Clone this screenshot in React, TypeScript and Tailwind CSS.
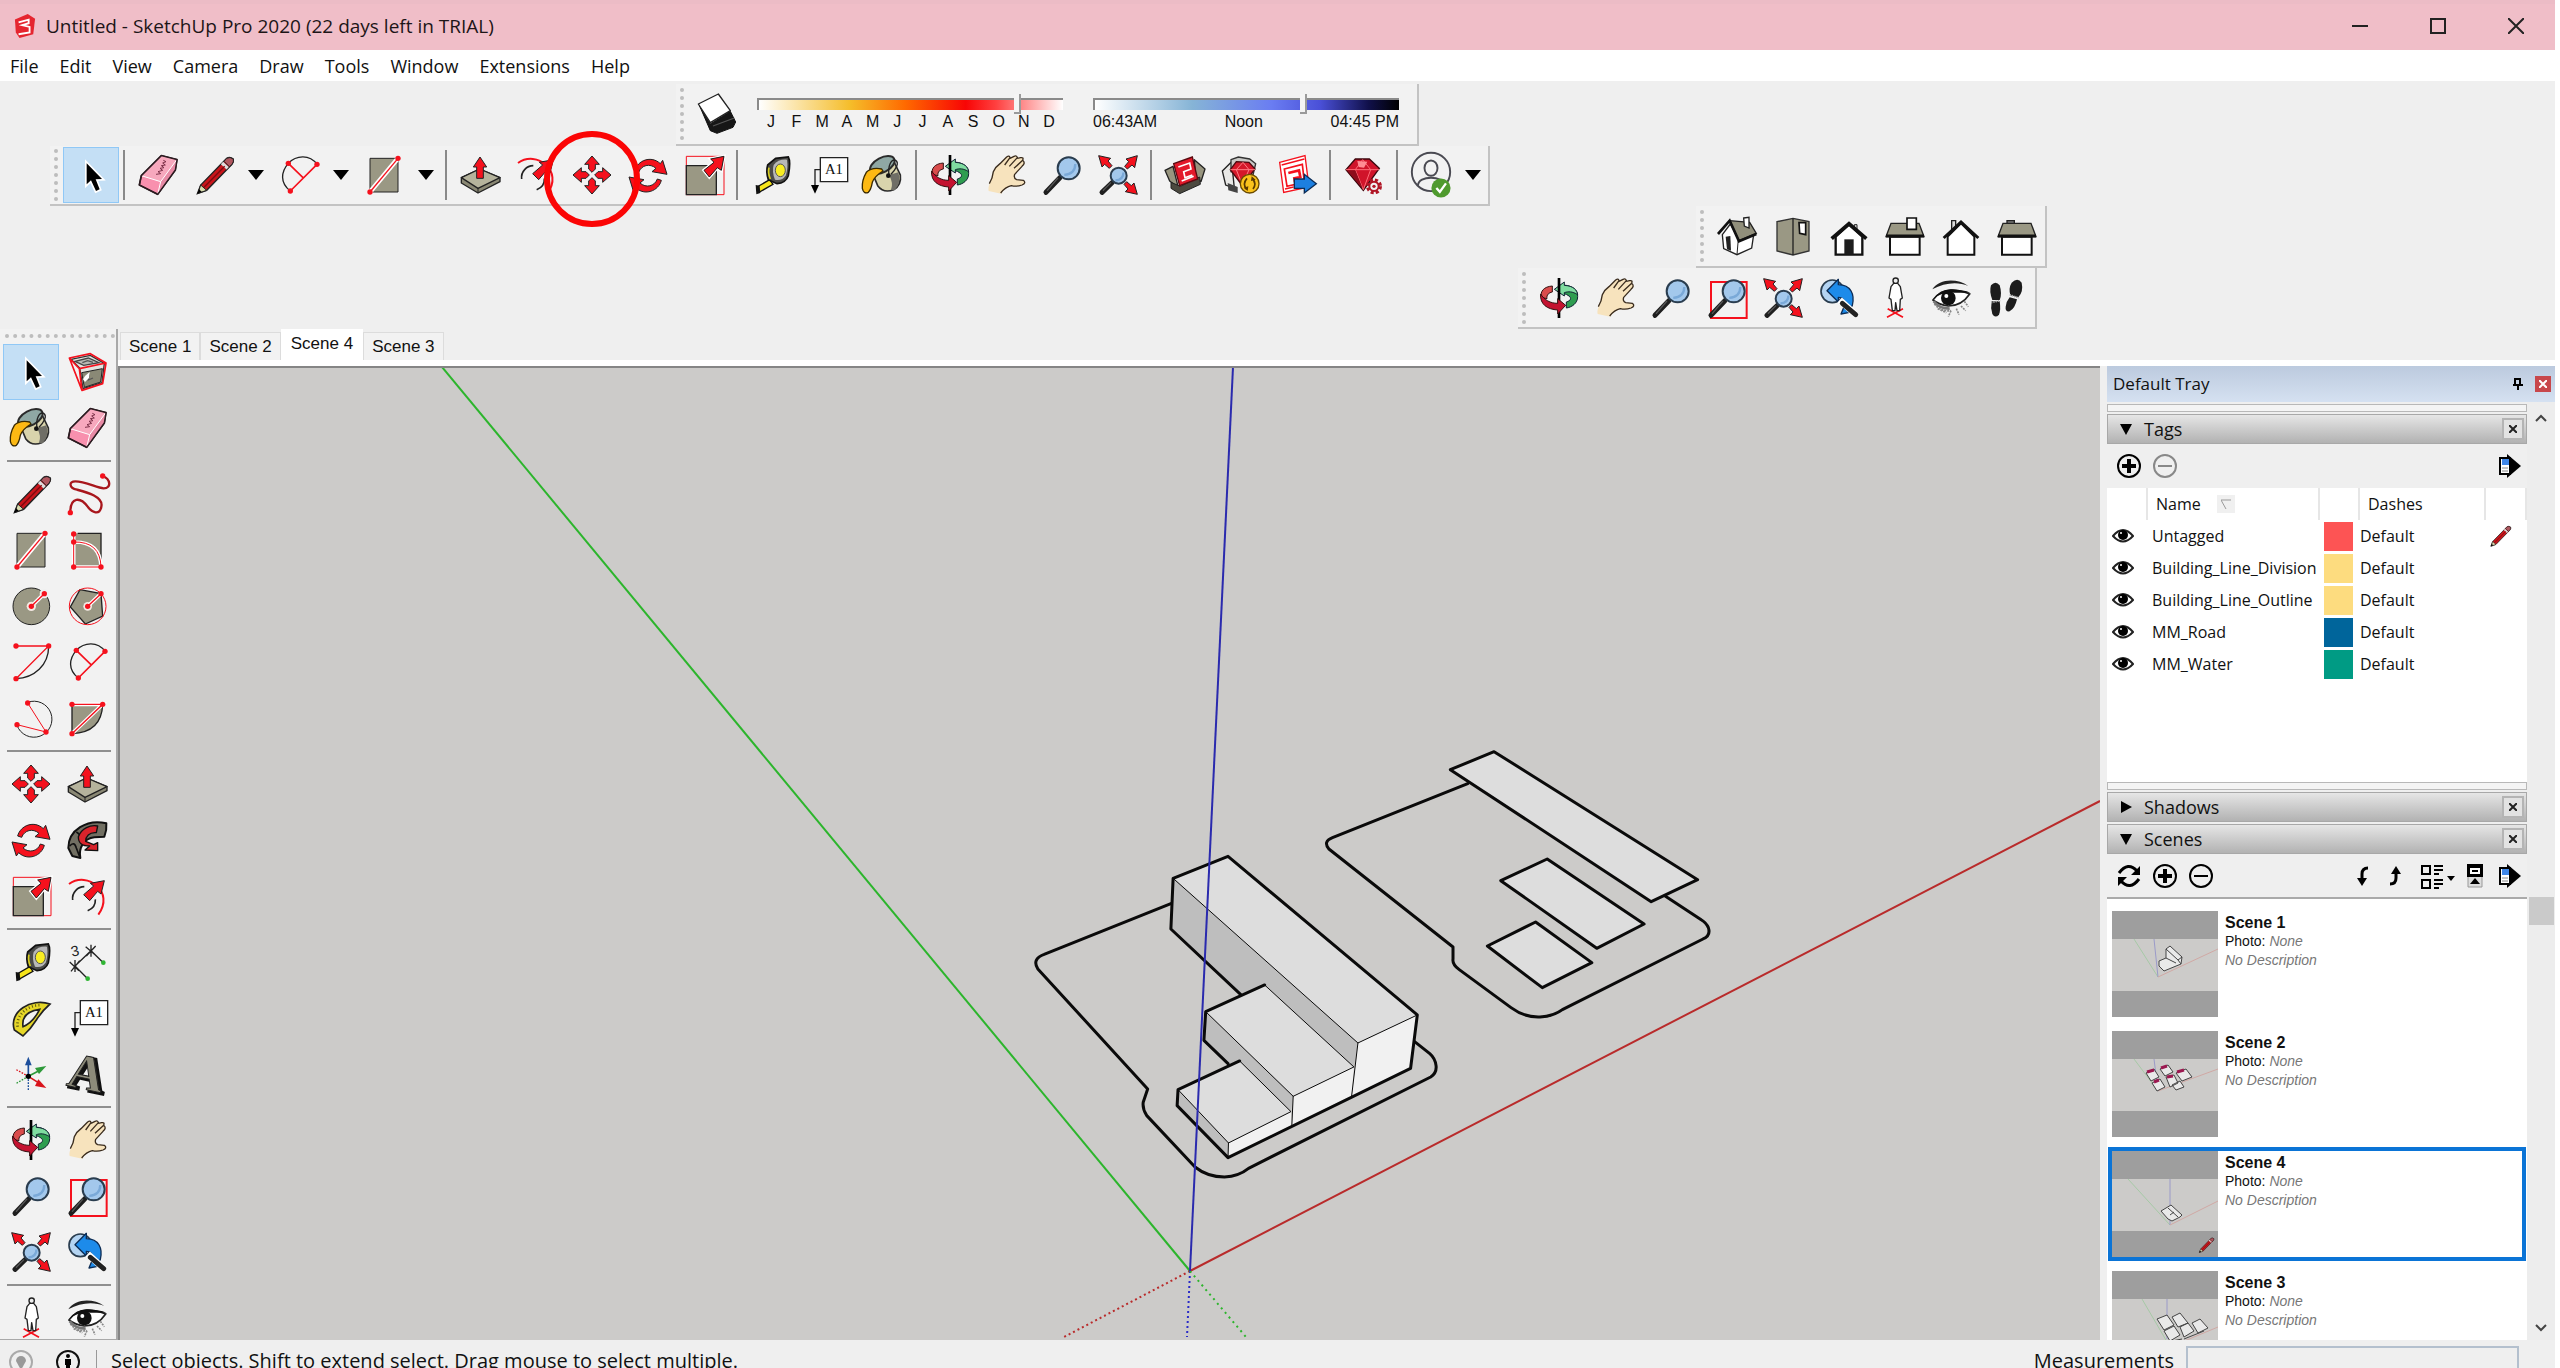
import type { ReactNode } from "react";
import clsx from "clsx";

const RED = "#f5111d";
const STONE = "#9a9884";

function Icon({ children, className }: { children: ReactNode; className?: string }) {
  return (
    <svg viewBox="0 0 120 120" className={clsx("shrink-0 overflow-visible", className ?? "size-10")} aria-hidden="true">
      {children}
    </svg>
  );
}

function Dots({ points }: { points: [number, number][] }) {
  return (
    <>
      {points.map(([x, y]) => (
        <circle key={`${x}-${y}`} cx={x} cy={y} r="8" fill={RED} />
      ))}
    </>
  );
}

/* ---------- drawing and selection tools ---------- */

const SelectIcon = () => (
  <Icon>
    <path d="M47 25V88L60 76L75 108L86 103L74 73L93 72Z" fill="#000" stroke="#fff" strokeWidth="10" paintOrder="stroke" />
  </Icon>
);

const ComponentIcon = () => (
  <Icon>
    <path d="M12 22L38 48L48 110L105 92L112 34L70 10Z" fill="#e4e4e0" stroke="#333" strokeWidth="4" />
    <path d="M44 62L106 50L101 90L52 106Z" fill="#8a8976" stroke="#222" strokeWidth="3" />
    <path d="M24 28L64 18L96 32L50 40Z" fill="#b9b9b3" stroke="#444" strokeWidth="4" />
    <path d="M46 32L62 26L78 31M54 76L66 70L64 84L78 78" fill="none" stroke="#555" strokeWidth="4" />
    <path d="M54 72L68 60L66 78L54 90L48 82Z" fill="#fff" />
    <path d="M7 18L70 5L117 33L37 50ZM7 18L45 115L107 95L117 33M37 50L45 115" fill="none" stroke={RED} strokeWidth="5" strokeLinejoin="round" />
  </Icon>
);

const PaintIcon = () => (
  <Icon>
    <path d="M24 44L44 92Q62 116 92 104Q116 90 112 60L90 14Z" fill="#d9d4ac" stroke="#2b2b2b" strokeWidth="5" />
    <path d="M78 60L106 52Q116 84 96 104Q88 108 84 104Q92 84 78 60Z" fill="#6f6e66" />
    <ellipse cx="58" cy="30" rx="40" ry="22" transform="rotate(-28 58 30)" fill="#8fa8a4" stroke="#2b2b2b" strokeWidth="6" />
    <path d="M56 42Q26 36 10 52Q-4 76 -2 100Q2 118 16 112Q24 104 28 82Q34 64 60 48Z" fill="#fdb913" stroke="#3a2a00" strokeWidth="4" />
    <path d="M78 62C74 30 86 10 98 16C110 24 98 44 84 58" fill="none" stroke="#222" strokeWidth="4" />
    <circle cx="76" cy="62" r="7" fill="#111" />
  </Icon>
);

const EraserIcon = () => (
  <Icon>
    <path d="M10 62L70 2L117 14L112 45L59 118L4 90Z" fill="#f890ae" stroke="#2b1b20" strokeWidth="5" strokeLinejoin="round" />
    <path d="M10 62L70 2L117 14L68 80Z" fill="#f7a8bd" />
    <path d="M68 80L117 14L112 45L59 118Z" fill="#e78aa5" />
    <path d="M10 62L68 80L59 118M68 80L115 16" fill="none" stroke="#fff" strokeWidth="3" />
    <path d="M10 62L70 2L117 14L112 45L59 118L4 90Z" fill="none" stroke="#2b1b20" strokeWidth="4" strokeLinejoin="round" />
    <path d="M76 16L84 20L74 24L82 30L70 32L78 38L66 40L74 46L60 50L68 56L54 58" fill="none" stroke="#7c3048" strokeWidth="3" />
  </Icon>
);

const PencilIcon = ({ className }: { className?: string }) => (
  <Icon className={className}>
    <path d="M10 116L20 90L98 10Q108 4 118 12Q120 20 114 28L38 106Z" fill="#c9151b" stroke="#222" strokeWidth="4" />
    <path d="M20 90L38 106L12 115Z" fill="#d9dcae" stroke="#222" strokeWidth="3" />
    <path d="M10 116L15 103L23 110Z" fill="#000" />
    <path d="M84 24L101 40" stroke="#ddd" strokeWidth="10" />
    <path d="M90 19L98 10Q108 4 118 12Q120 20 114 28L106 35Z" fill="#b0575f" stroke="#222" strokeWidth="3" />
    <path d="M30 97L92 34" stroke="#7a0b10" strokeWidth="4" />
  </Icon>
);

const FreehandIcon = () => (
  <Icon>
    <path d="M107 6C130 15 135 42 110 43C90 42 55 22 25 22C5 22 5 42 30 47C60 55 110 68 103 98C98 125 75 116 62 98C40 68 10 68 10 115" fill="none" stroke="#a8161c" strokeWidth="7" />
    <Dots points={[[107, 6], [10, 116]]} />
  </Icon>
);

const RectangleIcon = () => (
  <Icon>
    <path d="M18 10H102V111H18Z" fill={STONE} stroke="#222" strokeWidth="3" />
    <path d="M18 111L102 10" stroke="#fff" strokeWidth="14" />
    <path d="M18 111L102 10" stroke={RED} strokeWidth="4" />
    <Dots points={[[18, 111], [102, 10]]} />
  </Icon>
);

const RotatedRectIcon = () => (
  <Icon>
    <path d="M20 10H102V111H20Z" fill={STONE} />
    <path d="M32 10H102V90" fill="none" stroke="#222" strokeWidth="4" />
    <path d="M20 36Q100 34 102 111M20 12V111H102" fill="none" stroke="#fff" strokeWidth="11" />
    <path d="M20 36Q100 34 102 111M20 12V111H102" fill="none" stroke={RED} strokeWidth="3" />
    <Dots points={[[20, 12], [20, 36], [20, 111], [102, 111]]} />
  </Icon>
);

const CircleIcon = () => (
  <Icon>
    <circle cx="61" cy="61" r="55" fill={STONE} stroke="#222" strokeWidth="3" />
    <path d="M61 61L100 23" stroke="#fff" strokeWidth="12" />
    <circle cx="61" cy="61" r="14" fill="#f3e9e2" />
    <circle cx="100" cy="23" r="14" fill="#f0f0f0" />
    <path d="M61 61L100 23" stroke={RED} strokeWidth="4" />
    <Dots points={[[61, 61], [100, 23]]} />
  </Icon>
);

const PolygonIcon = () => (
  <Icon>
    <path d="M39 11L102 23L107 90L55 114L10 63Z" fill={STONE} stroke="#222" strokeWidth="4" />
    <circle cx="62" cy="61" r="55" fill="none" stroke={RED} strokeWidth="3" />
    <circle cx="62" cy="61" r="13" fill="#f3e9e2" />
    <path d="M62 61L102 23" stroke="#fff" strokeWidth="11" />
    <path d="M62 61L102 23" stroke={RED} strokeWidth="4" />
    <Dots points={[[62, 61], [102, 23]]} />
  </Icon>
);

const ArcIcon = () => (
  <Icon>
    <path d="M113 12C113 70 70 108 15 110" fill="none" stroke="#222" strokeWidth="4" />
    <path d="M15 12H113L15 110" fill="none" stroke={RED} strokeWidth="4" />
    <Dots points={[[15, 12], [113, 12], [15, 110]]} />
  </Icon>
);

const TwoPointArcIcon = () => (
  <Icon>
    <path d="M34 108C2 84 6 50 28 25C52 0 92 -2 114 28" fill="none" stroke="#222" strokeWidth="4" />
    <path d="M34 108L114 28M28 25L72 68" fill="none" stroke={RED} strokeWidth="5" />
    <Dots points={[[34, 108], [114, 28], [28, 25]]} />
  </Icon>
);

const ThreePointArcIcon = () => (
  <Icon>
    <path d="M50 13A54 54 0 1 1 18 82" fill="none" stroke="#222" strokeWidth="3" />
    <path d="M50 15L105 102L18 80" fill="none" stroke={RED} strokeWidth="3" />
    <Dots points={[[50, 15], [105, 102], [18, 80]]} />
  </Icon>
);

const PieIcon = () => (
  <Icon>
    <path d="M15 19H107Q104 104 15 107Z" fill={STONE} stroke="#222" strokeWidth="4" />
    <path d="M15 19H107L15 107" fill="none" stroke="#fff" strokeWidth="11" />
    <path d="M15 19H107L15 107" fill="none" stroke={RED} strokeWidth="4" />
    <Dots points={[[15, 19], [107, 19], [15, 107]]} />
  </Icon>
);

/* ---------- modification tools ---------- */

const MoveIcon = () => (
  <Icon>
    {[0, 90, 180, 270].map((angle) => (
      <path
        key={angle}
        d="M60 3L82 28H70V42L60 52L50 42V28H38Z"
        transform={`rotate(${angle} 60 60)`}
        fill={RED}
        stroke="#222"
        strokeWidth="3"
      />
    ))}
  </Icon>
);

const PushPullIcon = () => (
  <Icon>
    <path d="M4 68L59 42L120 68V80L54 114L4 84Z" fill="#8a8874" stroke="#222" strokeWidth="4" strokeLinejoin="round" />
    <path d="M4 68L59 42L120 68L54 100Z" fill="#b5b39c" stroke="#222" strokeWidth="4" strokeLinejoin="round" />
    <path d="M54 100V114" stroke="#222" strokeWidth="3" />
    <path d="M60 6L80 36H70V70H50V36H40Z" fill={RED} stroke="#222" strokeWidth="3" />
  </Icon>
);

const RotateIcon = () => (
  <Icon>
    {[0, 180].map((angle) => (
      <path
        key={angle}
        d="M20 48C28 16 70 0 97 26L104 16L117 58L72 50L84 40C66 24 40 30 32 52Z"
        transform={`rotate(${angle} 60 62)`}
        fill={RED}
        stroke="#222"
        strokeWidth="3"
        strokeLinejoin="round"
      />
    ))}
  </Icon>
);

const FollowMeIcon = () => (
  <Icon>
    <path d="M118 10C60 -4 4 30 4 84L16 108L40 114C34 84 50 56 82 52L112 50Q120 30 118 10Z" fill="#716f62" stroke="#111" strokeWidth="6" strokeLinejoin="round" />
    <path d="M8 78Q22 62 28 84L38 110M28 36Q44 44 42 66" fill="none" stroke="#111" strokeWidth="5" />
    <path d="M34 50C44 24 70 14 92 18L88 38C66 36 56 50 56 64L80 74L92 68V92L54 90L68 78C44 78 34 70 34 50Z" fill="#d8232b" stroke="#111" strokeWidth="4" strokeLinejoin="round" />
  </Icon>
);

const ScaleIcon = () => (
  <Icon>
    <path d="M7 4H120V119H7Z" fill="none" stroke={RED} strokeWidth="3" />
    <path d="M7 32H97V119H7Z" fill={STONE} stroke="#222" strokeWidth="4" />
    <path d="M120 4L112 46L100 38L76 66L60 46L90 22L80 12Z" fill={RED} stroke="#fff" strokeWidth="10" paintOrder="stroke" />
    <path d="M120 4L112 46L100 38L76 66L60 46L90 22L80 12Z" fill={RED} stroke="#222" strokeWidth="3" />
  </Icon>
);

const OffsetIcon = () => (
  <Icon>
    <path d="M6 24C62 -16 144 48 94 116" fill="none" stroke={RED} strokeWidth="6" />
    <path d="M17 72C14 50 32 32 52 32M85 70C86 86 78 98 62 104" fill="none" stroke="#222" strokeWidth="5" />
    <path d="M112 14L102 54L92 46L68 74L50 56L80 30L70 22Z" fill={RED} stroke="#222" strokeWidth="3" />
  </Icon>
);

/* ---------- construction tools ---------- */

const TapeIcon = () => (
  <Icon>
    <path d="M18 96L56 74L66 88L24 112Z" fill="#f7e51b" stroke="#111" strokeWidth="4" />
    <path d="M14 90L26 92L28 114L16 118Z" fill="#111" />
    <path d="M50 30L74 10L112 6Q120 20 112 62Q104 84 78 86L52 74Q44 50 50 30Z" fill="#4a4a48" stroke="#111" strokeWidth="5" />
    <path d="M68 30Q82 12 108 14Q112 40 104 62Q94 78 72 74Q62 50 68 30Z" fill="#b8b8b8" />
    <ellipse cx="88" cy="46" rx="15" ry="19" fill="#f9ee22" stroke="#555" strokeWidth="3" />
    <path d="M54 38Q50 54 58 72" fill="none" stroke="#d8ce1e" strokeWidth="5" />
  </Icon>
);

const DimensionIcon = () => (
  <Icon>
    <path d="M62 110L24 72L72 26L109 62M8 60L36 86M38 56L12 88M56 14L86 40M86 12L58 42M24 54V90M72 8V44" fill="none" stroke="#222" strokeWidth="4" />
    <circle cx="62" cy="110" r="7" fill="#2fb533" />
    <circle cx="109" cy="62" r="7" fill="#2fb533" />
    <text x="12" y="42" fontSize="44" fontFamily="Liberation Sans, sans-serif" fill="#222" transform="rotate(-12 24 28)">3</text>
  </Icon>
);

const ProtractorIcon = () => (
  <Icon>
    <path
      d="M117 18C60 -2 -8 42 10 96L36 114Q60 92 76 66T117 18ZM86 34Q66 74 36 86Q30 42 86 34Z"
      fill="#e6d728"
      fillRule="evenodd"
      stroke="#222"
      strokeWidth="5"
    />
    <path d="M20 86C14 50 54 18 92 22" fill="none" stroke="#5e5810" strokeWidth="8" strokeDasharray="3 7" />
  </Icon>
);

const TextIcon = () => (
  <Icon>
    <path d="M40 8H122V80H40Z" fill="#fff" stroke="#222" strokeWidth="4" />
    <path d="M40 44H24V92" fill="none" stroke="#222" strokeWidth="4" />
    <path d="M12 90H36L24 116Z" fill="#000" />
    <text x="81" y="58" fontSize="44" textAnchor="middle" fontFamily="Liberation Serif, serif" fill="#111">A1</text>
  </Icon>
);

const AxesIcon = () => (
  <Icon>
    <path d="M52 67V30" stroke="#1d4f9c" strokeWidth="5" />
    <path d="M42 34L52 8L62 34Z" fill="#1d4f9c" />
    <path d="M52 67L84 50" stroke="#2e9a3a" strokeWidth="5" />
    <path d="M72 42L106 36L84 60Z" fill="#2e9a3a" />
    <path d="M52 67L82 86" stroke="#d9141c" strokeWidth="5" />
    <path d="M82 76L106 102L72 96Z" fill="#d9141c" />
    <path d="M52 67V112" stroke="#1d4f9c" strokeWidth="4" strokeDasharray="5 4" />
    <path d="M52 67L14 46" stroke="#d9141c" strokeWidth="4" strokeDasharray="5 4" />
    <path d="M52 67L16 88" stroke="#2e9a3a" strokeWidth="4" strokeDasharray="5 4" />
    <circle cx="52" cy="67" r="8" fill="#000" />
  </Icon>
);

const TextThreeDIcon = () => (
  <Icon>
    <g fontFamily="Liberation Serif, serif" fontWeight="bold" fontSize="150" transform="rotate(12 60 60)">
      <text x="12" y="110" fill="#2b2a26" stroke="#111" strokeWidth="8">A</text>
      <text x="4" y="106" fill="#8d8b7a" stroke="#222" strokeWidth="3">A</text>
    </g>
  </Icon>
);

/* ---------- camera tools ---------- */

const OrbitIcon = () => (
  <Icon>
    <path d="M60 22C92 18 118 32 116 56C116 76 98 88 82 90V72C96 68 98 60 90 54C80 46 70 46 60 46Z" fill="#2e9d50" stroke="#123" strokeWidth="3" />
    <path d="M46 34L76 12V22C104 24 114 36 116 50C100 40 88 40 76 44V54Z" fill="#7fdca0" stroke="#123" strokeWidth="3" />
    <path d="M40 24C14 26 4 40 6 58L24 62C22 50 30 44 40 42Z" fill="#d94c4c" stroke="#311" strokeWidth="3" />
    <path d="M60 0V120" stroke="#000" strokeWidth="8" />
    <path d="M5 48C2 80 26 94 56 96V108L80 82L56 62V76C34 76 16 66 5 48Z" fill="#c41230" stroke="#311" strokeWidth="3" strokeLinejoin="round" />
  </Icon>
);

const HandIcon = () => (
  <Icon>
    <path
      d="M8 108C4 92 20 70 22 50Q28 36 42 26L62 6Q70 0 72 8L84 4Q92 0 94 8L104 8Q114 6 110 16L114 20Q118 28 108 34L86 58Q82 70 92 74L112 76Q122 84 108 90Q92 96 76 92Q58 96 46 116Z"
      fill="#f7e3bd"
    />
    <path
      d="M10 86Q20 70 22 50Q28 36 42 26L62 6Q70 0 72 8L56 30M72 10L84 4Q92 0 94 8L70 34M94 10L104 8Q114 6 110 16L84 40M110 16Q120 24 108 34L86 58Q82 70 92 74L112 76Q122 84 108 90Q92 96 76 92Q58 96 44 114"
      fill="none"
      stroke="#3a2c1e"
      strokeWidth="4"
      strokeLinejoin="round"
    />
  </Icon>
);

function Lens({ cx, cy, r }: { cx: number; cy: number; r: number }) {
  return (
    <>
      <path d={`M12 112L${cx - r * 0.8} ${cy + r * 0.85}`} stroke="#1f1f1f" strokeWidth="15" strokeLinecap="round" />
      <path d={`M16 106L${cx - r} ${cy + r * 0.9}`} stroke="#555" strokeWidth="4" strokeLinecap="round" />
      <circle cx={cx} cy={cy} r={r} fill="#a3c8ec" stroke="#2a3d4f" strokeWidth="6" />
      <path d={`M${cx - r * 0.4} ${cy + r * 0.6}Q${cx + r * 0.6} ${cy + r * 0.5} ${cx + r * 0.6} ${cy - r * 0.4}`} fill="none" stroke="#7aa9d8" strokeWidth="7" />
    </>
  );
}

const ZoomIcon = () => (
  <Icon>
    <Lens cx={80} cy={40} r={33} />
  </Icon>
);

const ZoomWindowIcon = () => (
  <Icon>
    <path d="M12 12H119V120H12Z" fill="none" stroke={RED} strokeWidth="6" />
    <Lens cx={80} cy={40} r={33} />
  </Icon>
);

const ZoomExtentsIcon = () => (
  <Icon>
    <Lens cx={62} cy={62} r={24} />
    {["rotate(0 60 60)", "rotate(90 60 60)", "rotate(180 60 60)"].map((transform) => (
      <path key={transform} d="M2 2L38 10L30 18L42 32L34 40L20 28L12 36Z" transform={transform} fill={RED} stroke="#222" strokeWidth="3" />
    ))}
  </Icon>
);

const PreviousIcon = () => (
  <Icon>
    <circle cx="40" cy="40" r="34" fill="#b4d4f2" stroke="#2a3d4f" strokeWidth="5" />
    <path d="M24 38L58 4V20C96 20 108 50 100 82L88 104L66 108L76 84C78 66 72 58 58 58V72Z" fill="#1d8bea" stroke="#0c2c55" strokeWidth="4" strokeLinejoin="round" />
    <path d="M62 66L110 110" stroke="#fff" strokeWidth="20" />
    <path d="M70 76L110 110" stroke="#222" strokeWidth="15" strokeLinecap="round" />
  </Icon>
);

const PositionCameraIcon = () => (
  <Icon>
    <path d="M38 92L84 118M84 92L36 118" stroke={RED} strokeWidth="5" />
    <path d="M56 16L48 26L42 60L48 64L52 98H60L62 74L66 98H74L76 64L82 60L76 26L68 16Z" fill="#fff" stroke="#222" strokeWidth="4" strokeLinejoin="round" />
    <circle cx="62" cy="8" r="8" fill="#eee" stroke="#222" strokeWidth="4" />
  </Icon>
);

const LookAroundIcon = () => (
  <Icon>
    <path d="M4 34C24 2 78 0 112 24C80 10 40 14 4 34Z" fill="#222" />
    <path d="M6 66Q24 38 60 36Q92 38 116 48Q92 84 52 84Q24 80 6 66Z" fill="#fff" stroke="#222" strokeWidth="5" />
    <path d="M6 64Q30 30 66 34Q98 36 118 44Q90 44 70 44Q30 42 6 64Z" fill="#111" />
    <circle cx="52" cy="60" r="22" fill="#111" />
    <circle cx="46" cy="54" r="6" fill="#fff" />
    <path d="M10 78Q30 102 60 98M20 92L46 104M60 98L52 116M76 92L84 110M90 84L104 98M100 70L112 86" fill="none" stroke="#888" strokeWidth="5" strokeDasharray="6 3" />
    <path d="M8 70Q24 92 56 92" fill="none" stroke="#777" strokeWidth="8" />
  </Icon>
);

const WalkIcon = () => (
  <Icon>
    <path d="M12 22Q26 6 38 22Q46 48 38 66H16Q6 40 12 22Z" fill="#1c1c1c" />
    <path d="M14 70L38 70Q42 96 36 110Q24 122 16 108Q10 90 14 70Z" fill="#1c1c1c" />
    <path d="M74 14Q92 -4 104 14Q110 40 94 58L70 52Q64 30 74 14Z" fill="#1c1c1c" />
    <path d="M68 58L90 64Q84 92 68 100Q54 102 56 86Q58 70 68 58Z" fill="#1c1c1c" />
    <path d="M12 74L40 68M68 50L96 60" stroke="#aaa" strokeWidth="5" strokeDasharray="4 3" />
  </Icon>
);

/* ---------- warehouse, extensions, account ---------- */

const WarehouseIcon = () => (
  <Icon>
    <path d="M0 46L24 34L40 98L14 78Z" fill="#98957f" stroke="#222" strokeWidth="4" strokeLinejoin="round" />
    <path d="M88 14L120 42L108 80L92 66Z" fill="#98957f" stroke="#222" strokeWidth="4" strokeLinejoin="round" />
    <path d="M18 82L46 94L104 66L106 88L44 116L18 100Z" fill="#4b493f" stroke="#222" strokeWidth="3" />
    <path d="M26 26L82 6L98 72L44 92Z" fill="#e3192a" stroke="#5a0a10" strokeWidth="4" />
    <path d="M40 36L74 24L78 42L56 50L60 68L82 60M50 78L86 64" fill="none" stroke="#fff" strokeWidth="5" />
  </Icon>
);

const ExtensionWarehouseIcon = () => (
  <Icon>
    <path d="M4 48L32 20L40 100L14 90Z" fill="#e8e8e6" stroke="#222" strokeWidth="4" />
    <path d="M30 14L52 6L86 12L104 26L96 60L30 50Z" fill="#c9c9c6" stroke="#333" strokeWidth="4" />
    <path d="M28 44L46 20L84 22L102 42L64 92Z" fill="#d5182a" stroke="#4a0a10" strokeWidth="4" />
    <path d="M28 44H102M46 44L64 90L84 44L66 22Z" fill="none" stroke="#ff7f87" strokeWidth="3" />
    <path d="M20 84L50 96V114L22 106Z" fill="#444" />
    <circle cx="86" cy="86" r="28" fill="#fbc31c" stroke="#6a4a00" strokeWidth="4" />
    <path d="M78 70Q64 86 76 102M94 70Q108 86 96 102" fill="none" stroke="#5a3a00" strokeWidth="5" />
    <path d="M68 98L82 94L80 108ZM104 74L90 78L92 64Z" fill="#5a3a00" />
  </Icon>
);

const LayoutIcon = () => (
  <Icon>
    <path d="M8 22L84 2L96 96L20 112Z" fill="#fff" stroke={RED} strokeWidth="4" />
    <path d="M14 30L82 12M24 102L50 96" stroke={RED} strokeWidth="4" />
    <path d="M22 42L76 28L82 82L30 94Z" fill="#fff" stroke={RED} strokeWidth="5" />
    <path d="M34 54L66 46L70 66L52 70L54 82" fill="none" stroke={RED} strokeWidth="8" />
    <path d="M52 72H82V58L118 86L82 114V100H52Z" fill="#1d7fe0" stroke="#0c2c55" strokeWidth="4" />
  </Icon>
);

const ExtensionManagerIcon = () => (
  <Icon>
    <path d="M6 44L34 12H76L106 40L58 106Z" fill="#d0142a" stroke="#3c060c" strokeWidth="4" />
    <path d="M6 44H106M34 44L58 104L80 44L56 14Z" fill="none" stroke="#ff6c78" strokeWidth="3" />
    <path d="M8 46H34L56 100Z" fill="#8d0c1b" />
    <path d="M40 18L70 20L60 38L44 36Z" fill="#ff8d94" />
    <circle cx="90" cy="94" r="19" fill="none" stroke="#b01525" strokeWidth="10" strokeDasharray="9 6" />
    <circle cx="90" cy="94" r="14" fill="#f0f0f0" stroke="#b01525" strokeWidth="6" />
    <circle cx="90" cy="94" r="5" fill="#b01525" />
  </Icon>
);

const AccountIcon = () => (
  <Icon className="size-[46px]">
    <circle cx="60" cy="52" r="50" fill="none" stroke="#4a4a52" strokeWidth="5" />
    <ellipse cx="60" cy="42" rx="17" ry="20" fill="none" stroke="#4a4a52" strokeWidth="5" />
    <path d="M26 88C26 60 94 60 94 88" fill="none" stroke="#4a4a52" strokeWidth="5" />
    <circle cx="86" cy="94" r="25" fill="#4f9a2e" />
    <path d="M74 94L83 104L99 82" fill="none" stroke="#fff" strokeWidth="6" />
  </Icon>
);

const ShadowIcon = () => (
  <Icon>
    <path d="M8 36L40 90L100 52L116 84L108 100L60 118L40 110Z" fill="#161616" stroke="#111" strokeWidth="3" />
    <path d="M4 30L64 0L100 50L40 86Z" fill="#fff" stroke="#222" strokeWidth="4" strokeLinejoin="round" />
    <path d="M48 96L112 72" stroke="#555" strokeWidth="4" />
  </Icon>
);

/* ---------- standard views ---------- */

const IsoIcon = () => (
  <Icon>
    <path d="M16 56L20 98L60 116L104 96L110 56L64 66L40 24Z" fill="#fff" stroke="#222" strokeWidth="4" />
    <path d="M60 116L64 68" stroke="#222" strokeWidth="3" />
    <path d="M26 62L40 60L42 104L30 100Z" fill="#222" />
    <path d="M38 14L98 19L118 52L66 74Z" fill="#918f7b" stroke="#222" strokeWidth="4" />
    <path d="M3 54L38 14L66 76L118 54" fill="none" stroke="#111" strokeWidth="8" />
    <path d="M80 6L96 4V36L82 30Z" fill="#fff" stroke="#222" strokeWidth="4" />
  </Icon>
);

const TopViewIcon = () => (
  <Icon>
    <path d="M12 17L60 7L108 17V105L60 117L12 105Z" fill={STONE} stroke="#333" strokeWidth="4" />
    <path d="M60 7V117" stroke="#222" strokeWidth="4" />
    <path d="M78 20H98V56L80 52Z" fill="#fff" stroke="#111" strokeWidth="5" />
  </Icon>
);

const FrontViewIcon = () => (
  <Icon>
    <path d="M76 26V46H84V26Z" fill="#ddd" stroke="#222" strokeWidth="3" />
    <path d="M20 62V116H100V62L60 26Z" fill="#fff" stroke="#111" strokeWidth="7" />
    <path d="M46 70H74V116H46Z" fill="#1d1d1d" />
    <path d="M8 68L60 23L112 68" fill="none" stroke="#111" strokeWidth="11" />
  </Icon>
);

const RightViewIcon = () => (
  <Icon>
    <path d="M15 62H104V116H15Z" fill="#fff" stroke="#111" strokeWidth="6" />
    <path d="M18 22H102L117 62H3Z" fill={STONE} stroke="#222" strokeWidth="4" />
    <path d="M3 60H117" stroke="#111" strokeWidth="9" />
    <path d="M66 6H94V40H66Z" fill="#fff" stroke="#111" strokeWidth="5" />
  </Icon>
);

const BackViewIcon = () => (
  <Icon>
    <path d="M32 14H44V48H32Z" fill="#ddd" stroke="#222" strokeWidth="4" />
    <path d="M20 62V116H100V62L60 22Z" fill="#fff" stroke="#111" strokeWidth="6" />
    <path d="M8 66L60 18L112 66" fill="none" stroke="#111" strokeWidth="9" />
  </Icon>
);

const LeftViewIcon = () => (
  <Icon>
    <path d="M30 14H52V24H30Z" fill="#777" stroke="#222" strokeWidth="4" />
    <path d="M15 62H104V116H15Z" fill="#fff" stroke="#111" strokeWidth="6" />
    <path d="M18 22H102L117 62H3Z" fill={STONE} stroke="#222" strokeWidth="4" />
    <path d="M3 60H117" stroke="#111" strokeWidth="9" />
  </Icon>
);

/* ---------- toolbars ---------- */

type Tool = {
  name: string;
  icon: () => ReactNode;
  menu?: boolean;
  active?: boolean;
  marked?: boolean;
};

const select: Tool = { name: "Select", icon: SelectIcon, active: true };
const orbit: Tool = { name: "Orbit", icon: OrbitIcon };
const pan: Tool = { name: "Pan", icon: HandIcon };
const zoom: Tool = { name: "Zoom", icon: ZoomIcon };
const zoomWindow: Tool = { name: "Zoom Window", icon: ZoomWindowIcon };
const zoomExtents: Tool = { name: "Zoom Extents", icon: ZoomExtentsIcon };
const previous: Tool = { name: "Previous", icon: PreviousIcon };
const positionCamera: Tool = { name: "Position Camera", icon: PositionCameraIcon };
const lookAround: Tool = { name: "Look Around", icon: LookAroundIcon };

const gettingStarted: Tool[][] = [
  [select],
  [
    { name: "Eraser", icon: EraserIcon },
    { name: "Line", icon: PencilIcon, menu: true },
    { name: "2 Point Arc", icon: TwoPointArcIcon, menu: true },
    { name: "Rectangle", icon: RectangleIcon, menu: true },
  ],
  [
    { name: "Push/Pull", icon: PushPullIcon },
    { name: "Offset", icon: OffsetIcon },
    { name: "Move", icon: MoveIcon, marked: true },
    { name: "Rotate", icon: RotateIcon },
    { name: "Scale", icon: ScaleIcon },
  ],
  [
    { name: "Tape Measure", icon: TapeIcon },
    { name: "Text", icon: TextIcon },
    { name: "Paint Bucket", icon: PaintIcon },
  ],
  [orbit, pan, zoom, zoomExtents],
  [
    { name: "3D Warehouse", icon: WarehouseIcon },
    { name: "Extension Warehouse", icon: ExtensionWarehouseIcon },
    { name: "Send to LayOut", icon: LayoutIcon },
  ],
  [{ name: "Extension Manager", icon: ExtensionManagerIcon }],
  [{ name: "Account", icon: AccountIcon, menu: true }],
];

const views: Tool[][] = [
  [
    { name: "Iso", icon: IsoIcon },
    { name: "Top", icon: TopViewIcon },
    { name: "Front", icon: FrontViewIcon },
    { name: "Right", icon: RightViewIcon },
    { name: "Back", icon: BackViewIcon },
    { name: "Left", icon: LeftViewIcon },
  ],
];

const camera: Tool[][] = [
  [orbit, pan, zoom, zoomWindow, zoomExtents, previous, positionCamera, lookAround, { name: "Walk", icon: WalkIcon }],
];

const largeToolSet: Tool[][] = [
  [
    select,
    { name: "Make Component", icon: ComponentIcon },
    { name: "Paint Bucket", icon: PaintIcon },
    { name: "Eraser", icon: EraserIcon },
  ],
  [
    { name: "Line", icon: PencilIcon },
    { name: "Freehand", icon: FreehandIcon },
    { name: "Rectangle", icon: RectangleIcon },
    { name: "Rotated Rectangle", icon: RotatedRectIcon },
    { name: "Circle", icon: CircleIcon },
    { name: "Polygon", icon: PolygonIcon },
    { name: "Arc", icon: ArcIcon },
    { name: "2 Point Arc", icon: TwoPointArcIcon },
    { name: "3 Point Arc", icon: ThreePointArcIcon },
    { name: "Pie", icon: PieIcon },
  ],
  [
    { name: "Move", icon: MoveIcon },
    { name: "Push/Pull", icon: PushPullIcon },
    { name: "Rotate", icon: RotateIcon },
    { name: "Follow Me", icon: FollowMeIcon },
    { name: "Scale", icon: ScaleIcon },
    { name: "Offset", icon: OffsetIcon },
  ],
  [
    { name: "Tape Measure", icon: TapeIcon },
    { name: "Dimensions", icon: DimensionIcon },
    { name: "Protractor", icon: ProtractorIcon },
    { name: "Text", icon: TextIcon },
    { name: "Axes", icon: AxesIcon },
    { name: "3D Text", icon: TextThreeDIcon },
  ],
  [orbit, pan, zoom, zoomWindow, zoomExtents, previous],
  [positionCamera, lookAround],
];

function ToolButton({ tool }: { tool: Tool }) {
  return (
    <div className="relative flex">
      <button
        type="button"
        aria-label={tool.name}
        aria-pressed={tool.active}
        className={clsx(
          "flex size-14 items-center justify-center border",
          tool.active ? "border-[#90c8f6] bg-[#c4dff5]" : "border-transparent",
        )}
      >
        <tool.icon />
      </button>
      {tool.menu && (
        <button type="button" aria-label={`${tool.name} options`} className="mr-px flex w-7 items-center justify-center">
          <svg viewBox="0 0 16 10" className="h-[10px] w-4">
            <path d="M0 0H16L8 10Z" />
          </svg>
        </button>
      )}
      {tool.marked && (
        <span className="pointer-events-none absolute -inset-x-5 -top-4 -bottom-6 z-10 rounded-full border-[6px] border-[#fb0505]" />
      )}
    </div>
  );
}

function Toolbar({ children, className }: { children: ReactNode; className: string }) {
  return (
    <div
      role="toolbar"
      className={clsx("flex w-fit items-center border-r-2 border-b-2 border-[#c3c3c3] bg-[#f2f2f2] pl-1", className)}
    >
      <span className="mr-[5px] h-[52px] border-l-4 border-dotted border-[#bdbdbd]" />
      {children}
    </div>
  );
}

function ToolGroups({ groups }: { groups: Tool[][] }) {
  return groups.map((group, i) => (
    <div key={group[0].name} className="flex items-center">
      {i > 0 && <span className="mr-[5px] ml-1 h-[50px] w-0.5 bg-[#8a8a8a]" />}
      {group.map((tool) => (
        <ToolButton key={tool.name} tool={tool} />
      ))}
    </div>
  ));
}

const sliderClass =
  "h-4 w-full appearance-none bg-transparent [&::-webkit-slider-runnable-track]:h-3 [&::-webkit-slider-runnable-track]:border-t-2 [&::-webkit-slider-runnable-track]:border-l-2 [&::-webkit-slider-runnable-track]:border-[#8a8a8a] [&::-webkit-slider-thumb]:-mt-1.5 [&::-webkit-slider-thumb]:h-5 [&::-webkit-slider-thumb]:w-[7px] [&::-webkit-slider-thumb]:appearance-none [&::-webkit-slider-thumb]:border-r-2 [&::-webkit-slider-thumb]:border-b-2 [&::-webkit-slider-thumb]:border-[#9a9a9a] [&::-webkit-slider-thumb]:bg-[#f4f4f4]";

function ShadowsToolbar() {
  return (
    <Toolbar className="ml-[676px] h-[62px]">
      <button type="button" aria-label="Show/Hide Shadows" className="mr-3 flex size-14 items-center justify-center">
        <ShadowIcon />
      </button>
      <div className="w-[306px] text-base leading-5">
        <input
          type="range"
          aria-label="Date"
          min={0}
          max={100}
          defaultValue={86}
          className={clsx(
            sliderClass,
            "block [&::-webkit-slider-runnable-track]:bg-[linear-gradient(90deg,#fff,#f5bd2a_30%,#ff6a00_48%,#f80505_68%,#ff4040_78%,#fff)]",
          )}
        />
        <div className="flex justify-between px-2">
          {"JFMAMJJASOND".split("").map((month, i) => (
            <span key={i} className="w-3 text-center">
              {month}
            </span>
          ))}
        </div>
      </div>
      <div className="mr-[18px] ml-[30px] w-[306px] text-base leading-5">
        <input
          type="range"
          aria-label="Time"
          min={0}
          max={100}
          defaultValue={69}
          className={clsx(
            sliderClass,
            "block [&::-webkit-slider-runnable-track]:bg-[linear-gradient(90deg,#fff,#86b4d6_32%,#6a7df2_58%,#4a50d8_74%,#10104a_90%,#000)]",
          )}
        />
        <div className="flex justify-between">
          <span>06:43AM</span>
          <span>Noon</span>
          <span>04:45 PM</span>
        </div>
      </div>
    </Toolbar>
  );
}

function Sidebar() {
  return (
    <aside className="flex w-[118px] shrink-0 flex-col overflow-hidden border-r-2 border-b border-[#a9a9a9] bg-[#f2f2f2] pt-[5px] pl-[3px]">
      <span className="mb-1.5 ml-0.5 w-[110px] border-t-4 border-dotted border-[#bdbdbd]" />
      {largeToolSet.map((group, i) => (
        <div key={group[0].name} className="w-28 shrink-0">
          {i > 0 && <div className="mx-1 my-1 h-0.5 bg-[#8f8f8f]" />}
          <div className="grid grid-cols-2">
            {group.map((tool) => (
              <ToolButton key={tool.name} tool={tool} />
            ))}
          </div>
        </div>
      ))}
    </aside>
  );
}

/* ---------- drawing area ---------- */

function Viewport() {
  return (
    <main className="min-w-0 flex-1 border-t-2 border-l-2 border-[#858585] bg-[#cccbc9]">
      <svg viewBox="120 369 1980 980" preserveAspectRatio="xMinYMin slice" className="size-full" role="img" aria-label="Model">
        <g fill="none" strokeWidth="2">
          <path d="M1190 1272L442 368" stroke="#2cb52c" />
          <path d="M1190 1272L2100 802" stroke="#b92b2b" />
          <path d="M1190 1272L1064 1338" stroke="#b92b2b" strokeDasharray="2 3" />
          <path d="M1190 1272L1187 1338" stroke="#2a2ac8" strokeDasharray="2 3" />
          <path d="M1190 1272L1246 1338" stroke="#2cb52c" strokeDasharray="2 4" />
        </g>
        <g
          transform="translate(1020 740) scale(0.4464 0.3333)"
          stroke="#0a0a0a"
          strokeWidth="3"
          strokeLinejoin="round"
          strokeLinecap="round"
          fill="none"
          className="[&_path]:[vector-effect:non-scaling-stroke]"
        >
          {/* flat footprint */}
          <path d="M1003 134L700 296Q678 308 692 330L970 624V660Q968 676 984 692L1100 806Q1130 836 1165 834Q1195 832 1215 812L1530 600Q1548 590 1542 566Q1538 552 1526 542L1446 472" />
          <path d="M1062 38L964 92L1414 488L1518 422Z" fill="#dddddd" />
          <path d="M1181 360L1077 425L1292 628L1398 555Z" fill="#dddddd" />
          <path d="M1155 549L1047 621L1170 746L1281 671Z" fill="#dddddd" />

          {/* extruded blocks */}
          <path d="M338 494L54 646Q26 660 40 690L286 1050L276 1090Q274 1110 284 1130L392 1284Q420 1314 458 1314Q490 1312 512 1288L920 1014Q934 1002 932 980Q930 958 918 944L884 908" />
          <g stroke="none">
            <path d="M343 418L466 352L890 828L757 912Z" fill="#dddddd" />
            <path d="M343 418L757 912L748 986L548 738L494 766L338 570Z" fill="#bebebe" />
            <path d="M757 912L890 828L875 988L743 1070Z" fill="#f1f1f1" />
            <path d="M416 818L548 738L748 984L612 1072Z" fill="#dddddd" />
            <path d="M416 818L612 1072L607 1118L492 966L466 974L412 904Z" fill="#bebebe" />
            <path d="M612 1072L748 984L743 1070L609 1158Z" fill="#f1f1f1" />
            <path d="M354 1052L492 966L607 1118L467 1212Z" fill="#dddddd" />
            <path d="M354 1052L467 1212L466 1256L352 1100Z" fill="#bebebe" />
            <path d="M467 1212L607 1118L609 1158L466 1256Z" fill="#f1f1f1" />
          </g>
          <g strokeWidth="1">
            <path d="M343 418L757 912L890 828M757 912L743 1070" />
            <path d="M548 738L748 984L612 1072L416 818M612 1072L609 1158" />
            <path d="M492 966L607 1118L467 1212L354 1052M467 1212L466 1256" />
          </g>
          <path d="M494 766L338 570L343 418L466 352L890 828L875 988L466 1256L352 1100L354 1052L492 966" />
          <path d="M548 738L416 818L412 904L466 974" />
        </g>
        <path d="M1190 1272L1233 368" stroke="#2a2aae" strokeWidth="2" fill="none" />
      </svg>
    </main>
  );
}

/* ---------- tray ---------- */

const tags = [
  { name: "Untagged", color: "bg-[#fd5454]", current: true },
  { name: "Building_Line_Division", color: "bg-[#fddc7f]" },
  { name: "Building_Line_Outline", color: "bg-[#fddc7f]" },
  { name: "MM_Road", color: "bg-[#00659b]" },
  { name: "MM_Water", color: "bg-[#009b84]" },
];

const EyeIcon = () => (
  <svg viewBox="0 0 22 16" className="h-4 w-[22px]">
    <path d="M1 8Q11 -4 21 8Q11 19 1 8Z" fill="#fff" stroke="#222" strokeWidth="2" />
    <circle cx="11" cy="7" r="5" />
    <circle cx="9" cy="5" r="1" fill="#fff" />
  </svg>
);

function CircleSign({ plus, muted }: { plus?: boolean; muted?: boolean }) {
  return (
    <svg viewBox="0 0 24 24" className="size-6" fill="none" stroke={muted ? "#888" : "#000"} strokeWidth="2">
      <circle cx="12" cy="12" r="11" />
      <path d={plus ? "M5 12H19M12 5V19" : "M5 12H19"} strokeWidth={plus ? 4 : 2} />
    </svg>
  );
}

const DetailsIcon = () => (
  <svg viewBox="0 0 22 24" className="h-6 w-[22px]">
    <path d="M8 0L22 12L8 24Z" />
    <path d="M1 4H11V20H1Z" fill="#fff" stroke="#000" strokeWidth="2" />
    <path d="M3 5H10V11H3Z" fill="#3f86e8" />
    <path d="M3 14H9M3 17H9" stroke="#888" />
  </svg>
);

function PanelHeader({ title, open }: { title: string; open?: boolean }) {
  return (
    <div className="flex h-[30px] shrink-0 items-center border border-[#a8a8a8] bg-linear-to-b from-[#e6e6e6] to-[#b2b2b2] pr-0.5 pl-3">
      <button type="button" aria-expanded={!!open} className="flex flex-1 items-center gap-3 text-left text-[18px] leading-6">
        <svg viewBox="0 0 12 12" className="size-3">
          <path d={open ? "M0 1H12L6 12Z" : "M1 0L12 6L1 12Z"} />
        </svg>
        {title}
      </button>
      <button type="button" aria-label={`Close ${title}`} className="flex size-[22px] items-center justify-center border-2 border-[#b4b4b4] bg-[#e2e2e2]">
        <svg viewBox="0 0 8 8" className="size-2" stroke="#222" strokeWidth="2">
          <path d="M0 0L8 8M8 0L0 8" />
        </svg>
      </button>
    </div>
  );
}

function TagsPanel() {
  return (
    <section className="flex shrink-0 flex-col">
      <PanelHeader title="Tags" open />
      <div className="flex h-11 items-center gap-3 pr-1.5 pl-2.5">
        <button type="button" aria-label="Add Tag">
          <CircleSign plus />
        </button>
        <button type="button" aria-label="Delete Tag">
          <CircleSign muted />
        </button>
        <button type="button" aria-label="Tag details" className="ml-auto">
          <DetailsIcon />
        </button>
      </div>
      <div className="h-[294px] bg-white">
        <table className="w-full table-fixed text-left text-base leading-5">
          <thead>
            <tr className="h-8 *:border-r-2 *:border-[#e6e6e6] *:p-0 *:font-normal">
              <th className="w-10" aria-label="Visible" />
              <th className="w-[172px]">
                <span className="flex items-center gap-4 pl-2">
                  Name
                  <span className="flex size-[18px] items-center justify-center bg-[#f0f0f0]">
                    <svg viewBox="0 0 10 10" className="size-[10px]" fill="none" stroke="#999">
                      <path d="M10 1H0L5 10" />
                    </svg>
                  </span>
                </span>
              </th>
              <th className="w-10" aria-label="Color" />
              <th className="w-[126px]">
                <span className="pl-2">Dashes</span>
              </th>
              <th aria-label="Current" />
            </tr>
          </thead>
          <tbody>
            {tags.map((tag) => (
              <tr key={tag.name} className="h-8 *:p-0">
                <td className="pl-[5px]!">
                  <button type="button" aria-label={`Toggle ${tag.name}`} className="block">
                    <EyeIcon />
                  </button>
                </td>
                <td className="pl-[5px]! whitespace-nowrap">{tag.name}</td>
                <td>
                  <span className={clsx("ml-[5px] block size-[29px]", tag.color)} />
                </td>
                <td className="pl-px!">Default</td>
                <td className="pl-1!">{tag.current && <PencilIcon className="size-[22px]" />}</td>
              </tr>
            ))}
          </tbody>
        </table>
      </div>
    </section>
  );
}

/* axes and outlines of the small previews, on a 106 x 52 canvas */
const scenes = [
  {
    name: "Scene 1",
    green: "M22 0L46 38",
    blue: "M42 0L46 38",
    red: "M46 38L106 10",
    model: "M47 22L54 19L54 10L58 7L70 18L69 25L52 32L47 27ZM54 10L66 21L69 25M66 21L70 18M54 19L64 24",
  },
  {
    name: "Scene 2",
    green: "M22 0L46 32",
    blue: "M42 0L46 32",
    red: "M46 32L106 10",
    model:
      "M34 14L42 10L47 18L39 22ZM48 10L56 6L61 13L53 17ZM64 14L74 10L80 18L70 22ZM40 24L48 20L53 28L45 32ZM54 18L62 16L66 24L58 28ZM60 26L68 22L72 28L64 31Z",
    accent: "M35 13L42 11M49 9L55 7M65 13L72 11M42 23L47 21M55 18L61 17",
  },
  {
    name: "Scene 4",
    green: "M16 0L58 46",
    blue: "M58 0V46",
    red: "M58 46L106 22",
    model: "M49 32L59 26L70 36L68 38L60 42L56 40ZM56 29L66 38M58 36L62 33",
    current: true,
  },
  {
    name: "Scene 3",
    green: "M30 0L58 48",
    blue: "M55 0V40",
    red: "M58 48L106 28",
    model:
      "M45 20L55 16L62 26L52 31ZM60 18L68 14L76 24L66 28ZM52 32L62 27L68 36L58 42ZM68 28L76 24L82 32L72 38ZM80 24L88 20L96 29L86 34ZM72 40L92 32M60 42L70 40",
  },
];

function SceneItem({ scene }: { scene: (typeof scenes)[number] }) {
  return (
    <li
      className={clsx(
        "mb-1.5 flex h-[114px] shrink-0 gap-[7px] border-4",
        scene.current ? "border-[#0b74d6]" : "border-transparent",
      )}
    >
      <div className="relative h-[106px] w-[106px] shrink-0 bg-[#9e9e9e] pt-7">
        <svg viewBox="0 0 106 52" className="block h-[52px] w-[106px] bg-[#cccbc9]" fill="none" strokeWidth="1">
          <path d={scene.green} stroke="#a6c9a6" />
          <path d={scene.blue} stroke="#9a9ac8" />
          <path d={scene.red} stroke="#d0a8a4" />
          <path d={scene.model} stroke="#444" fill="#e9e9e9" />
          {scene.accent && <path d={scene.accent} stroke="#9c1850" strokeWidth="3" />}
        </svg>
        {scene.current && <PencilIcon className="absolute right-1 bottom-1 size-4" />}
      </div>
      <div className="font-['Liberation_Sans',Arial,sans-serif] text-sm leading-[19px]">
        <h3 className="pt-0.5 text-base leading-[19px] font-bold">{scene.name}</h3>
        <p>
          Photo: <i className="text-[#777]">None</i>
        </p>
        <p className="text-[#777] italic">No Description</p>
      </div>
    </li>
  );
}

function ScenesPanel() {
  return (
    <section className="flex min-h-0 flex-1 flex-col">
      <PanelHeader title="Scenes" open />
      <div className="flex h-[43px] shrink-0 items-center gap-3 pr-1.5 pl-2.5">
        <button type="button" aria-label="Update Scene">
          <svg viewBox="0 0 24 24" className="size-6" fill="none" stroke="#000" strokeWidth="3">
            <path d="M2 9Q11 -3 20 7M22 15Q13 27 4 17" />
            <path d="M23 2V11H14ZM1 22V13H10Z" fill="#000" stroke="none" />
          </svg>
        </button>
        <button type="button" aria-label="Add Scene">
          <CircleSign plus />
        </button>
        <button type="button" aria-label="Remove Scene">
          <CircleSign />
        </button>
        <span className="flex-1" />
        <button type="button" aria-label="Move Scene Down" className="mr-2">
          <svg viewBox="0 0 12 20" className="h-5 w-3" fill="none" stroke="#000" strokeWidth="3">
            <path d="M11 2Q5 2 5 8V14" />
            <path d="M0 12H10L5 20Z" fill="#000" stroke="none" />
          </svg>
        </button>
        <button type="button" aria-label="Move Scene Up" className="mr-2">
          <svg viewBox="0 0 12 20" className="h-5 w-3" fill="none" stroke="#000" strokeWidth="3">
            <path d="M1 18Q7 18 7 12V6" />
            <path d="M2 8H12L7 0Z" fill="#000" stroke="none" />
          </svg>
        </button>
        <button type="button" aria-label="View Options">
          <svg viewBox="0 0 34 26" className="h-[26px] w-[34px]" fill="none" stroke="#000" strokeWidth="2">
            <path d="M1 3H9V11H1ZM1 17H9V25H1ZM13 3H22M13 7H22M13 11H18M13 17H22M13 21H22M13 25H18" />
            <path d="M26 13H34L30 18Z" fill="#000" stroke="none" />
          </svg>
        </button>
        <button type="button" aria-label="Show Details" className="mr-1">
          <svg viewBox="0 0 16 24" className="h-6 w-4">
            <path d="M1 1H15V23H1Z" fill="#ddd" stroke="#999" />
            <path d="M0 0H16V13H0Z" />
            <path d="M4 5H12V9H4Z" fill="none" stroke="#fff" strokeWidth="2" />
            <path d="M3 20L8 14L13 20Z" />
          </svg>
        </button>
        <button type="button" aria-label="Scene menu">
          <DetailsIcon />
        </button>
      </div>
      <ul className="flex min-h-0 flex-1 flex-col overflow-hidden border-t-2 border-[#aaa] bg-white px-px pt-2">
        {scenes.map((scene) => (
          <SceneItem key={scene.name} scene={scene} />
        ))}
      </ul>
    </section>
  );
}

function Splitter() {
  return <div className="mb-0.5 h-2 shrink-0 border border-[#b8b8b8] bg-[#f4f4f4]" />;
}

function Tray() {
  return (
    <aside className="ml-[7px] flex w-[448px] shrink-0 flex-col">
      <header className="flex h-9 shrink-0 items-center bg-linear-to-b from-[#bccade] to-[#d5e1f1] pr-1 pl-1.5">
        <h2 className="flex-1 text-[17px] leading-6">Default Tray</h2>
        <button type="button" aria-label="Auto Hide" className="mr-3">
          <svg viewBox="0 0 10 12" className="h-3 w-[10px]" fill="none" stroke="#000" strokeWidth="2">
            <path d="M2 0V7M7 0V7M2 1H8M0 7H10M5 7V12" />
          </svg>
        </button>
        <button type="button" aria-label="Close Tray" className="flex size-4 items-center justify-center bg-[#c8474b]">
          <svg viewBox="0 0 8 8" className="size-2" stroke="#fff" strokeWidth="2">
            <path d="M0 0L8 8M8 0L0 8" />
          </svg>
        </button>
      </header>
      <div className="flex min-h-0 flex-1">
        <div className="flex w-[420px] flex-col pt-0.5">
          <Splitter />
          <TagsPanel />
          <Splitter />
          <PanelHeader title="Shadows" />
          <div className="h-0.5 shrink-0" />
          <ScenesPanel />
        </div>
        <div className="flex flex-1 flex-col items-center justify-between bg-[#ededed] py-2">
          <svg viewBox="0 0 12 8" className="mt-1 h-2 w-3" fill="none" stroke="#444" strokeWidth="2">
            <path d="M1 7L6 2L11 7" />
          </svg>
          <div className="mt-[76px] h-7 w-[25px] bg-[#cacaca]" />
          <svg viewBox="0 0 12 8" className="h-2 w-3" fill="none" stroke="#444" strokeWidth="2">
            <path d="M1 1L6 6L11 1" />
          </svg>
        </div>
      </div>
    </aside>
  );
}

/* ---------- window ---------- */

const menus = ["File", "Edit", "View", "Camera", "Draw", "Tools", "Window", "Extensions", "Help"];
const sceneTabs = ["Scene 1", "Scene 2", "Scene 4", "Scene 3"];

function TitleBar() {
  return (
    <header className="flex h-[50px] shrink-0 items-center border-t-4 border-[#ecbcc6] bg-[#f0bec8] pb-0.5 pl-3.5 text-[#1d1517]">
      <svg viewBox="0 0 24 26" className="h-6 w-[22px]">
        <path d="M1 6L15 0L23 5L21 22L6 26L2 20Z" fill="#e5252f" />
        <path d="M5 9L16 6V10L9 12L17 14V20L5 22" fill="none" stroke="#fff" strokeWidth="2" />
      </svg>
      <h1 className="ml-2.5 flex-1 text-[19px] leading-6">Untitled - SketchUp Pro 2020 (22 days left in TRIAL)</h1>
      <button type="button" aria-label="Minimize" className="flex w-[78px] justify-center">
        <svg viewBox="0 0 16 16" className="size-4" stroke="#222" strokeWidth="2">
          <path d="M0 8H16" />
        </svg>
      </button>
      <button type="button" aria-label="Maximize" className="flex w-[78px] justify-center">
        <svg viewBox="0 0 16 16" className="size-4" fill="none" stroke="#222" strokeWidth="2">
          <path d="M1 1H15V15H1Z" />
        </svg>
      </button>
      <button type="button" aria-label="Close" className="flex w-[78px] justify-center">
        <svg viewBox="0 0 16 16" className="size-4" stroke="#222" strokeWidth="2">
          <path d="M0 0L16 16M16 0L0 16" />
        </svg>
      </button>
    </header>
  );
}

function StatusBar() {
  return (
    <footer className="flex h-7 shrink-0 items-start overflow-hidden pl-[9px] text-xl leading-[42px]">
      <svg viewBox="0 0 24 24" className="mt-2.5 size-6 shrink-0">
        <circle cx="12" cy="12" r="11" fill="none" stroke="#aaa" strokeWidth="2" />
        <path d="M12 20L7 11A5 5 0 1 1 17 11Z" fill="#999" />
      </svg>
      <svg viewBox="0 0 24 24" className="mt-2.5 ml-[23px] size-6 shrink-0">
        <circle cx="12" cy="12" r="11" fill="none" stroke="#111" strokeWidth="2" />
        <circle cx="12" cy="6" r="2" />
        <path d="M9 9H15V15H14V20H10V15H9Z" />
      </svg>
      <span className="mt-2.5 ml-4 h-8 w-px bg-[#999]" />
      <p className="ml-3.5 flex-1">Select objects. Shift to extend select. Drag mouse to select multiple.</p>
      <label htmlFor="measurements">Measurements</label>
      <input id="measurements" className="mt-1.5 mr-9 ml-3 h-10 w-[333px] border-2 border-[#b4c0ce] bg-[#efefef] px-2" />
    </footer>
  );
}

export default function App() {
  return (
    <div className="h-screen overflow-hidden bg-white pr-[5px] font-['Open_Sans','Segoe_UI',sans-serif] text-[#111]">
      <div className="flex h-full flex-col bg-[#efefef]">
        <TitleBar />
        <nav className="flex h-[31px] shrink-0 items-center gap-[21px] bg-white pl-2.5 text-[18px] leading-6">
          {menus.map((menu) => (
            <button key={menu} type="button">
              {menu}
            </button>
          ))}
        </nav>
        <div className="flex shrink-0 flex-col pt-[3px] font-['Liberation_Sans',Arial,sans-serif]">
          <ShadowsToolbar />
          <Toolbar className="ml-[50px] h-[60px]">
            <ToolGroups groups={gettingStarted} />
          </Toolbar>
          <Toolbar className="ml-[1696px] h-[62px]">
            <ToolGroups groups={views} />
          </Toolbar>
          <Toolbar className="ml-[1518px] h-[61px]">
            <ToolGroups groups={camera} />
          </Toolbar>
        </div>
        <div className="flex min-h-0 flex-1">
          <Sidebar />
          <div className="flex min-w-0 flex-1 flex-col">
            <div
              role="tablist"
              className="flex h-[37px] shrink-0 items-end border-b-[6px] border-white pl-0.5 font-['Liberation_Sans',Arial,sans-serif] text-[17px] leading-5"
            >
              {sceneTabs.map((tab) => (
                <button
                  key={tab}
                  type="button"
                  role="tab"
                  aria-selected={tab === "Scene 4"}
                  className={clsx(
                    "px-2",
                    tab === "Scene 4"
                      ? "h-[31px] bg-white px-2.5 pb-0.5"
                      : "h-7 border border-b-0 border-[#dcdcdc] bg-[#f2f2f2]",
                  )}
                >
                  {tab}
                </button>
              ))}
            </div>
            <div className="flex min-h-0 flex-1">
              <Viewport />
              <Tray />
            </div>
          </div>
        </div>
        <StatusBar />
      </div>
    </div>
  );
}
